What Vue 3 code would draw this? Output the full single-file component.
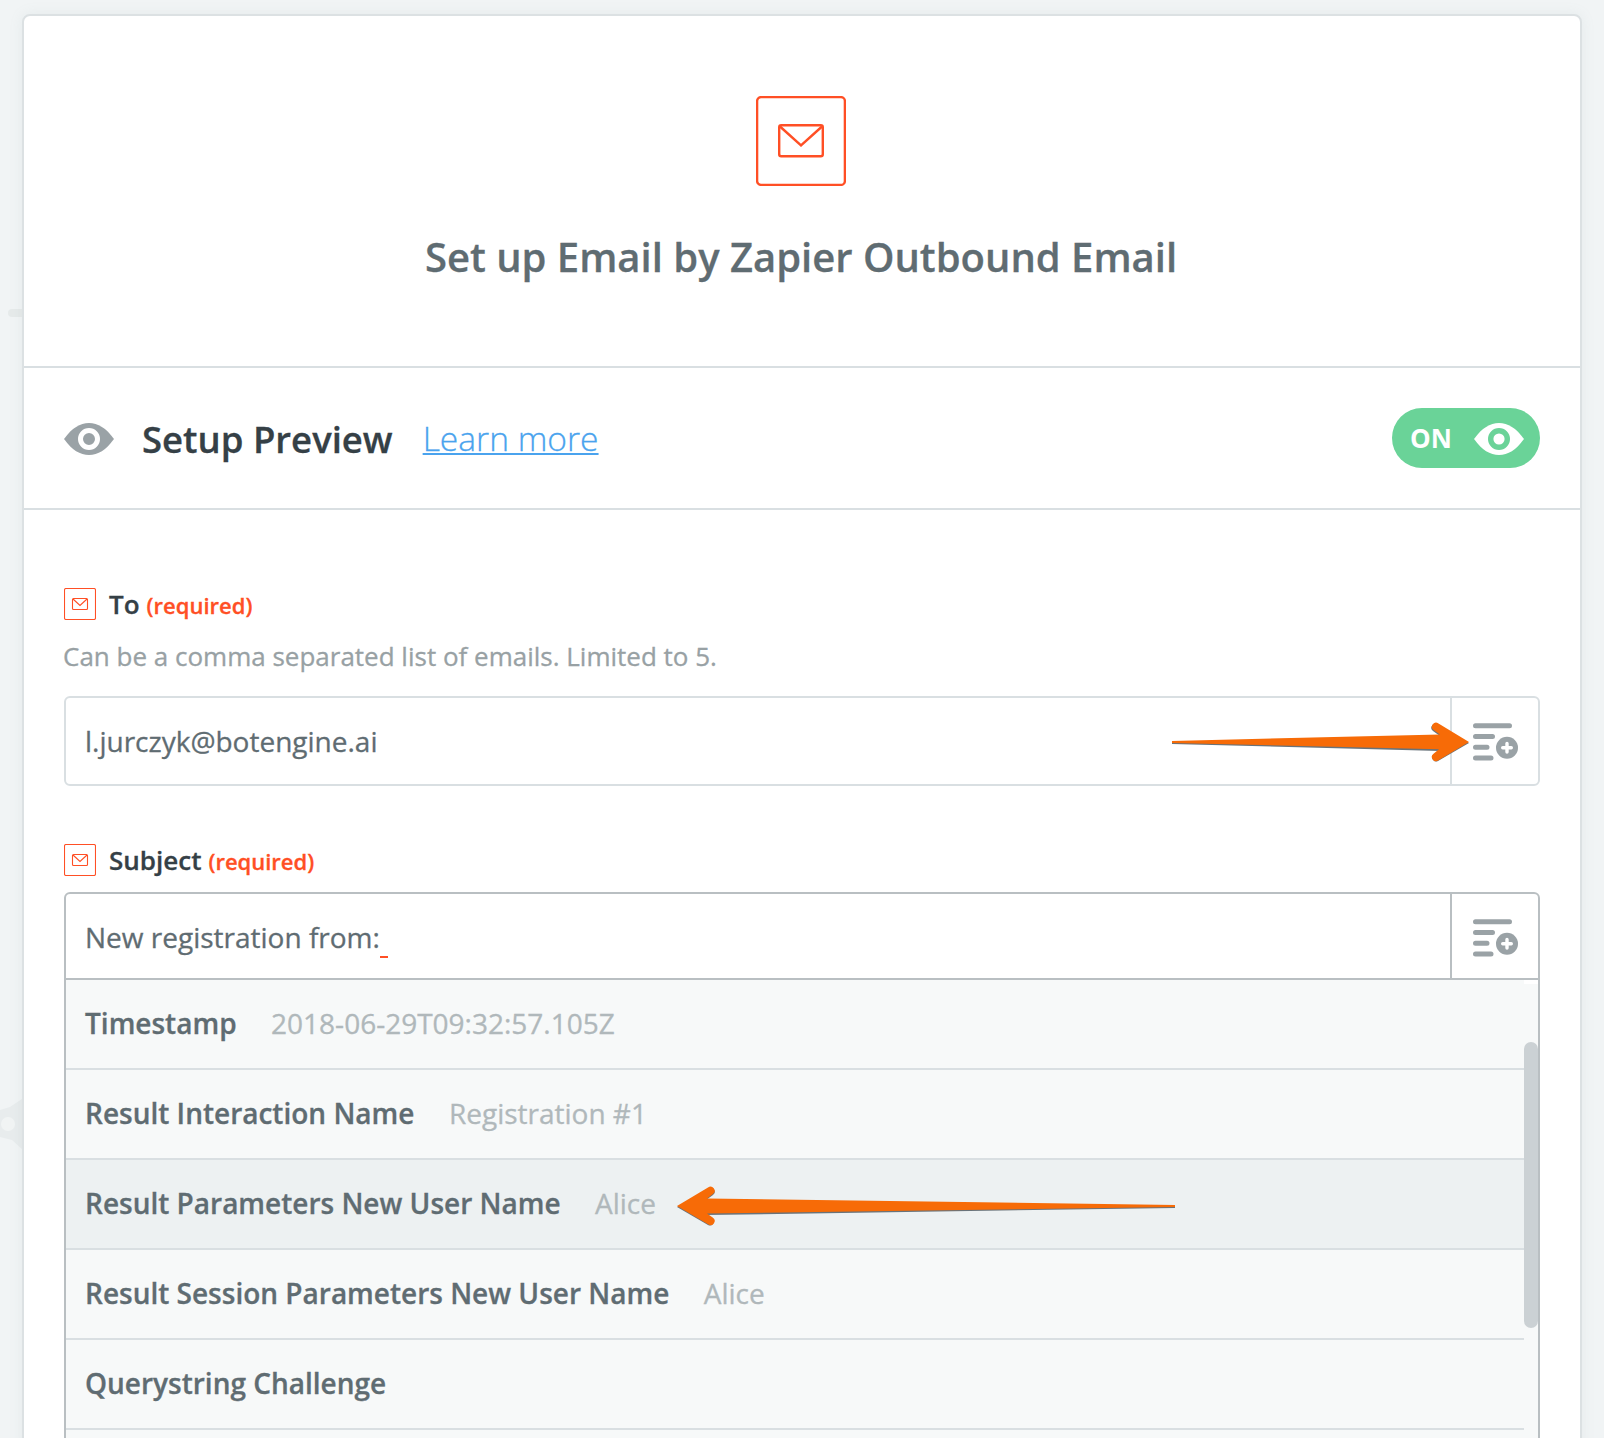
<script setup>
const fields = [
  { text: 'Timestamp', value: '2018-06-29T09:32:57.105Z' },
  { text: 'Result Interaction Name', value: 'Registration #1' },
  { text: 'Result Parameters New User Name', value: 'Alice', active: true },
  { text: 'Result Session Parameters New User Name', value: 'Alice' },
  { text: 'Querystring Challenge', value: '' },
  { text: '', value: '' }
]
const eye = 'M0 16C8 5 16 0 25 0s17 5 25 16C42 27 34 32 25 32S8 27 0 16z'
</script>

<template>
  <div class="page">
    <svg class="backdrop" width="22" height="1438" viewBox="0 0 22 1438">
      <path d="M12 309h10v8H12a3.500 3.500 0 0 1 0-8z" fill="#e6eaea" />
      <path d="M0 1110l10-3 12-8v50l-10-9-12-3z" fill="#e8eced" />
      <circle cx="8" cy="1124" r="7" fill="#f1f4f4" />
    </svg>

    <main class="card">
      <header class="hero">
        <svg class="hero-icon" width="90" height="90" viewBox="0 0 90 90">
          <rect x="1.100" y="1.100" width="87.800" height="87.800" rx="4" />
          <rect x="23.200" y="29.200" width="43.600" height="31" rx="2" />
          <path d="M24 30.500l21 18.800 21-18.800" />
        </svg>
        <h1>Set up Email by Zapier Outbound Email</h1>
      </header>

      <section class="preview">
        <svg width="50" height="32" viewBox="0 0 50 32">
          <path :d="eye" fill="#9aa2a6" />
          <circle cx="25" cy="16" r="8.500" fill="none" stroke="#fff" stroke-width="5" />
        </svg>
        <h2>Setup Preview</h2>
        <a class="learn">Learn more</a>
        <div class="toggle">
          <span>ON</span>
          <svg width="50" height="32" viewBox="0 0 50 32">
            <path :d="eye" fill="#fff" />
            <circle cx="25" cy="16" r="8.300" fill="none" stroke="#6ad398" stroke-width="5.400" />
          </svg>
        </div>
      </section>

      <section class="form">
        <div class="label">
          <svg class="mail" width="32" height="32" viewBox="0 0 32 32">
            <rect x=".5" y=".5" width="31" height="31" rx="1.500" />
            <rect x="8.500" y="10.500" width="15" height="11" rx="1" />
            <path d="M9 11l7 6.500 7-6.500" />
          </svg>
          <p><span class="name">To</span><span class="req">(required)</span></p>
        </div>
        <p class="help">Can be a comma separated list of emails. Limited to 5.</p>
        <div class="field">
          <div class="text email">l.jurczyk@botengine.ai</div>
          <div class="insert">
            <svg width="46" height="38" viewBox="0 0 46 38">
              <path d="M2.500 2.800h34M2.500 13.500H19.500M2.500 24.300H14M2.500 35H18" stroke="#9aa2a6" stroke-width="5" stroke-linecap="round" />
              <circle cx="34" cy="24.700" r="11" fill="#9aa2a6" />
              <path d="M34 20.500v8.600M29.700 24.800h8.600" stroke="#fff" stroke-width="3.400" stroke-linecap="round" />
            </svg>
          </div>
        </div>

        <div class="label second">
          <svg class="mail" width="32" height="32" viewBox="0 0 32 32">
            <rect x=".5" y=".5" width="31" height="31" rx="1.500" />
            <rect x="8.500" y="10.500" width="15" height="11" rx="1" />
            <path d="M9 11l7 6.500 7-6.500" />
          </svg>
          <p><span class="name">Subject</span><span class="req">(required)</span></p>
        </div>
        <div class="field open">
          <div class="text"><span class="subject">New registration from:</span><i class="caret"></i></div>
          <div class="insert">
            <svg width="46" height="38" viewBox="0 0 46 38">
              <path d="M2.500 2.800h34M2.500 13.500H19.500M2.500 24.300H14M2.500 35H18" stroke="#9aa2a6" stroke-width="5" stroke-linecap="round" />
              <circle cx="34" cy="24.700" r="11" fill="#9aa2a6" />
              <path d="M34 20.500v8.600M29.700 24.800h8.600" stroke="#fff" stroke-width="3.400" stroke-linecap="round" />
            </svg>
          </div>
        </div>
        <div class="menu">
          <ul>
            <li v-for="f in fields" :key="f.text" :class="{ active: f.active }">
              <b>{{ f.text }}</b><span>{{ f.value }}</span>
            </li>
          </ul>
          <div class="track"><div class="thumb"></div></div>
        </div>
      </section>
    </main>

    <svg class="arrow to" width="300" height="44" viewBox="0 0 300 44">
      <path class="shade" d="M0 21L268 15 261 10A4 4 0 0 1 266 3.500L297 22 266 40A4 4 0 0 1 261 34L268 30 0 23z" />
      <path d="M0 21L268 14.500 261.500 10A4 4 0 0 1 266.500 3.500L297 22 266.500 40.200A4 4 0 0 1 261.500 33.700L267 29.300 0 23z" />
    </svg>
    <svg class="arrow pick" width="500" height="44" viewBox="0 0 500 44">
      <path class="shade" d="M498 21L29 15 36 10A4 4 0 0 0 31 3.500L0 22 31 40A4 4 0 0 0 36 34L29 30 498 23z" />
      <path d="M498 21L30 14.500 36 10A4 4 0 0 0 31 3.500L0 22 31 40.200A4 4 0 0 0 36 33.700L30 29.500 498 23z" />
    </svg>
  </div>
</template>

<style>
body { margin: 0; background: #f0f3f4; overflow: hidden; }
</style>

<style scoped>
* { box-sizing: border-box; }
h1, h2, p, ul { margin: 0; padding: 0; }
svg { display: block; flex: none; }

.page {
  position: relative;
  width: 1604px;
  height: 1438px;
  padding: 14px 22px 0;
  overflow: hidden;
  background: #f1f4f5;
  font-family: "Open Sans", "Noto Sans", sans-serif;
  color: #5f6c72;
  -webkit-text-stroke: .3px;
}
.backdrop { position: absolute; left: 0; top: 0; }
.card {
  position: relative;
  height: 1440px;
  border: 2px solid #dce1e3;
  border-radius: 8px;
  background: #fff;
  box-shadow: 0 0 14px rgba(130, 155, 160, .1);
}

.hero {
  display: flex;
  flex-direction: column;
  align-items: center;
  height: 352px;
  padding-top: 80px;
  border-bottom: 2px solid #d9dfe2;
}
.hero-icon { margin-right: 2px; fill: none; stroke: #ff4f25; stroke-width: 2.400; }
h1 {
  margin: 44px 2px 0 0;
  font-size: 40px;
  line-height: 54px;
  font-weight: 600;
  white-space: nowrap;
}

.preview {
  display: flex;
  align-items: center;
  height: 142px;
  padding: 0 40px;
  border-bottom: 2px solid #d9dfe2;
}
.preview > svg { margin-top: 2px; }
h2 { margin: 2px 0 0 28px; font-size: 36.500px; font-weight: 600; line-height: 50px; color: #354046; white-space: nowrap; }
.learn {
  margin: 0 auto 0 30px;
  font-size: 33.600px;
  line-height: 46px;
  font-weight: 300;
  color: #4aa3ee;
  text-decoration: underline;
  text-decoration-thickness: 2px;
  text-underline-offset: 2px;
  text-decoration-skip-ink: none;
  white-space: nowrap;
}
.toggle {
  display: flex;
  align-items: center;
  justify-content: space-between;
  width: 148px;
  height: 60px;
  padding: 0 16px 0 18px;
  border-radius: 30px;
  background: #6ad398;
  color: #fff;
  font-size: 26px;
  font-weight: 700;
  -webkit-text-stroke: 0;
}
.toggle svg { margin-top: 2px; }

.form { padding: 78px 40px 0; }
.label { display: flex; align-items: center; height: 32px; }
.label.second { margin-top: 58px; }
.mail { fill: none; stroke: #ff4f25; stroke-width: 1.100; }
.label p { margin: 3px 0 0 13px; line-height: 32px; white-space: nowrap; }
.name { font-size: 26px; font-weight: 600; color: #354046; }
.req { margin-left: 7px; font-size: 22px; font-weight: 600; color: #ff4f25; }
.help { margin: 18px 0 22px -1px; font-size: 26px; line-height: 36px; color: #98a1a4; }

.field {
  display: flex;
  height: 90px;
  border: 2px solid #d9dfe2;
  border-radius: 6px;
}
.text { flex: 1; display: flex; align-items: center; padding-left: 19px; font-size: 28px; white-space: nowrap; }
.insert { display: flex; align-items: center; width: 88px; padding: 2px 0 0 21px; border-left: 2px solid #d9dfe2; }
.field.open { height: 88px; margin-top: 16px; border-color: #b9bfc2; border-radius: 6px 6px 0 0; }
.open .text { padding-top: 2px; }
.open .insert { padding-top: 4px; border-color: #b9bfc2; }
.caret { width: 8px; height: 2px; margin-top: 40px; background: #ff4f25; }

.menu {
  display: flex;
  height: 480px;
  border: solid #b9bfc2;
  border-width: 0 2px;
  background: #f7f9f9;
}
ul { flex: 1; list-style: none; }
li {
  display: flex;
  align-items: center;
  height: 90px;
  padding: 0 0 2px 19px;
  border-bottom: 2px solid #d9dfe2;
  font-size: 28px;
  white-space: nowrap;
}
li b { font-weight: 600; }
li span { margin-left: 34.500px; color: #b0b8bb; }
li.active { background: #edf1f2; }
.track { width: 14px; padding-top: 58px; border-top: 4px solid #fff; }
.thumb { height: 286px; border-radius: 7px; background: #cbd1d4; }

.arrow { position: absolute; fill: #f76b07; }
.arrow .shade { fill: #69737a; transform: translateY(1px); }
.arrow.to { left: 1172px; top: 720px; }
.arrow.pick { left: 677px; top: 1184px; }
</style>
